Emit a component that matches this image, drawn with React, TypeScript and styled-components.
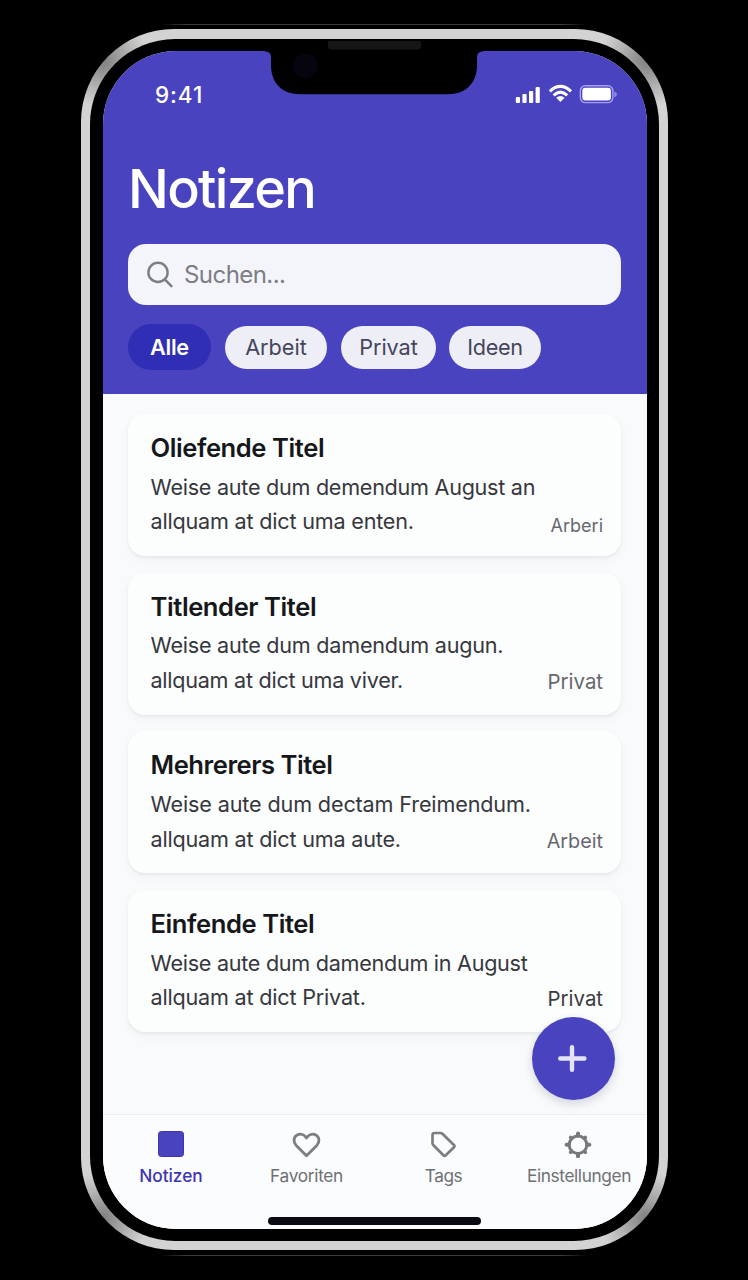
import React from "react";
import styled, { createGlobalStyle } from "styled-components";

const indigo = "#4943c0";

const GlobalStyle = createGlobalStyle`
  * { box-sizing: border-box; }
  body {
    margin: 0;
    background: #000;
    font-family: Inter, "Liberation Sans", sans-serif;
  }
  h1, h2, p { margin: 0; }
  button { font: inherit; border: 0; padding: 0; background: none; }
`;

const Stage = styled.main`
  width: 748px;
  height: 1280px;
  padding: 24px 77px 0 77px;
  background: #000;
`;

const Halo = styled.div`
  width: 594px;
  height: 1232px;
  padding: 5px 3px 0 4px;
  border-radius: 96px;
  background:
    linear-gradient(90deg, transparent 80px, #3c3c3c 110px, #3c3c3c 484px, transparent 514px) top / 100% 1px no-repeat,
    linear-gradient(90deg, transparent 80px, #3c3c3c 110px, #3c3c3c 484px, transparent 514px) bottom / 100% 1px no-repeat;
`;

const Frame = styled.div`
  width: 587px;
  height: 1221px;
  padding: 9.5px 9px;
  border-radius: 93px;
  background:
    radial-gradient(circle at 22px 32px, #808080 0, #b4b4b4 28px, #d3d3d3 46px, transparent 52px) 0 0 / 90px 90px no-repeat,
    radial-gradient(circle at 68px 32px, #808080 0, #b4b4b4 28px, #d3d3d3 46px, transparent 52px) 100% 0 / 90px 90px no-repeat,
    radial-gradient(circle at 22px 58px, #808080 0, #b4b4b4 28px, #d3d3d3 46px, transparent 52px) 0 100% / 90px 90px no-repeat,
    radial-gradient(circle at 68px 58px, #808080 0, #b4b4b4 28px, #d3d3d3 46px, transparent 52px) 100% 100% / 90px 90px no-repeat,
    #d3d3d3;
`;

const Bezel = styled.div`
  position: relative;
  height: 100%;
  padding: 12.5px 12.5px 12px 13px;
  border-radius: 85px;
  background: #000;
`;

const Screen = styled.div`
  position: relative;
  display: flex;
  flex-direction: column;
  height: 1178px;
  border-radius: 73px;
  overflow: hidden;
  background: #f9fafb;
`;

const Notch = styled.svg`
  position: absolute;
  top: 2px;
  left: 175px;
`;

const Header = styled.header`
  display: flex;
  flex-direction: column;
  flex: none;
  height: 342.5px;
  padding: 0 25.5px 0 25px;
  background: ${indigo};
`;

const StatusBar = styled.div`
  display: flex;
  justify-content: space-between;
  align-items: center;
  height: 86px;
  padding: 0 4px 0 27px;
`;

const Clock = styled.span`
  color: #fff;
  font-size: 22.5px;
  font-weight: 500;
  letter-spacing: 0.9px;
`;

const PageTitle = styled.h1`
  height: 107px;
  padding-top: 18.5px;
  color: #fff;
  font-size: 54px;
  line-height: 66px;
  font-weight: 550;
  letter-spacing: -1.7px;
`;

const SearchField = styled.div`
  display: flex;
  align-items: center;
  flex: none;
  height: 61px;
  padding-left: 19px;
  gap: 11px;
  border-radius: 18px;
  background: #f4f5fa;
  color: #7d7d82;
  font-size: 24px;
  letter-spacing: -0.55px;
`;

const Chips = styled.div`
  display: flex;
  align-items: center;
  height: 46px;
  margin-top: 18.5px;
`;

const Chip = styled.button<{ $active?: boolean; $width: number; $gap: number; $spacing: number }>`
  width: ${(p) => p.$width}px;
  height: ${(p) => (p.$active ? 46 : 43.5)}px;
  margin-top: ${(p) => (p.$active ? 0 : 1.5)}px;
  margin-right: ${(p) => p.$gap}px;
  border-radius: 23px;
  background: ${(p) => (p.$active ? "#302eb4" : "#eeeef7")};
  color: ${(p) => (p.$active ? "#fff" : "#45455c")};
  font-size: 21.7px;
  font-weight: ${(p) => (p.$active ? 600 : 400)};
  letter-spacing: ${(p) => p.$spacing}px;
  text-align: center;
`;

const Notes = styled.section`
  display: flex;
  flex-direction: column;
  flex: 1;
  gap: 16.7px;
  padding: 20.5px 25.5px 0 25px;
  background: #f9fafb;
`;

const Card = styled.article`
  display: flex;
  flex-direction: column;
  height: 142px;
  padding: 17px 18px 0 22.5px;
  border-radius: 17px;
  background: #fcfdfd;
  box-shadow: 0 2px 3px rgba(60, 80, 100, 0.07), 0 4px 12px rgba(60, 80, 100, 0.04);
`;

const CardTitle = styled.h2<{ $spacing: number }>`
  color: #16171a;
  font-size: 25.6px;
  line-height: 34px;
  font-weight: 600;
  letter-spacing: ${(p) => p.$spacing}px;
`;

const CardLine = styled.p<{ $spacing: number }>`
  height: 34.5px;
  color: #36373c;
  font-size: 21.6px;
  line-height: 34.5px;
  letter-spacing: ${(p) => p.$spacing}px;
  white-space: nowrap;
`;

const CardText = styled.div`
  margin-top: 4.7px;
`;

const LastRow = styled.div`
  display: flex;
  justify-content: space-between;
`;

const Category = styled.span<{ $size: number; $top: number; $dark?: boolean }>`
  padding-top: ${(p) => p.$top}px;
  color: ${(p) => (p.$dark ? "#3a3b40" : "#67686d")};
  font-size: ${(p) => p.$size}px;
  line-height: 36px;
`;

const AddButton = styled.button`
  position: absolute;
  top: 966px;
  left: 428.5px;
  display: flex;
  align-items: center;
  justify-content: center;
  width: 83px;
  height: 83px;
  border-radius: 50%;
  background: ${indigo};
  box-shadow: 0 4px 10px rgba(60, 70, 110, 0.2);
`;

const TabBar = styled.nav`
  display: grid;
  grid-template-columns: 136px 135px 139px 132px;
  flex: none;
  height: 115.5px;
  padding-top: 15.5px;
  border-top: 1.5px solid #eceef0;
  background: #fbfcfd;
`;

const Tab = styled.div<{ $active?: boolean; $spacing: number }>`
  display: flex;
  flex-direction: column;
  align-items: center;
  gap: 5px;
  color: ${(p) => (p.$active ? "#3f35b0" : "#6f7074")};
  font-size: 17.3px;
  line-height: 26px;
  font-weight: ${(p) => (p.$active ? 500 : 400)};
  letter-spacing: ${(p) => p.$spacing}px;
  white-space: nowrap;
`;

const HomeIndicator = styled.div`
  position: absolute;
  bottom: 4px;
  left: 165px;
  width: 213px;
  height: 8px;
  border-radius: 4px;
  background: #090a12;
`;

const notes = [
  { title: "Oliefende Titel", ts: -0.43, a: "Weise aute dum demendum August an", as: -0.27, b: "allquam at dict uma enten.", bs: -0.2, cat: "Arberi", size: 18, top: 3.5 },
  { title: "Titlender Titel", ts: -0.43, a: "Weise aute dum damendum augun.", as: -0.24, b: "allquam at dict uma viver.", bs: -0.27, cat: "Privat", size: 20.4, top: 1.5 },
  { title: "Mehrerers Titel", ts: -0.45, a: "Weise aute dum dectam Freimendum.", as: -0.14, b: "allquam at dict uma aute.", bs: -0.2, cat: "Arbeit", size: 19.8, top: 1.3 },
  { title: "Einfende Titel", ts: -0.43, a: "Weise aute dum damendum in August", as: -0.28, b: "allquam at dict Privat.", bs: -0.2, cat: "Privat", size: 20.4, top: 0.5, dark: true },
];

const StatusIcons = () => (
  <svg width="102" height="22" viewBox="0 -2 102 22" fill="#fff">
    <rect x="0.8" y="12" width="4.2" height="6" rx="1" />
    <rect x="7.4" y="9" width="4.2" height="9" rx="1" />
    <rect x="14" y="6" width="4.2" height="12" rx="1" />
    <rect x="20.6" y="2" width="4.2" height="16" rx="1" />
    <g fill="none" stroke="#fff" strokeWidth="3">
      <path d="M34.8 6.3 Q45.4 -3.6 56 6.3" />
      <path d="M38.6 10.3 Q45.4 4 52.2 10.3" />
    </g>
    <path d="M41.2 12.8 Q45.4 9.1 49.6 12.8 L45.4 17 Z" />
    <rect x="65.3" y="0.8" width="32.6" height="16.8" rx="5" fill="none" stroke="#a5a1f0" strokeWidth="1.4" />
    <rect x="67.3" y="2.8" width="28.6" height="12.8" rx="3" />
    <path d="M99.2 6.6 q2.8 .6 2.8 2.8 q0 2.2 -2.8 2.8 z" fill="#8e89e6" />
  </svg>
);

const SearchIcon = () => (
  <svg width="26" height="27" viewBox="0 0 26 27" fill="none" stroke="#7d7d82" strokeWidth="2.4" strokeLinecap="round">
    <circle cx="11" cy="11.4" r="9.6" />
    <path d="M18 18.6 L24.4 25.2" />
  </svg>
);

const NotesIcon = () => (
  <svg width="28" height="28" viewBox="0 0 28 28">
    <rect x="1.5" y="1.5" width="25" height="25" rx="2.8" fill={indigo} stroke="#3d35a8" />
  </svg>
);

const HeartIcon = () => (
  <svg width="30" height="28" viewBox="0 0 30 28" fill="none" stroke="#7d7e82" strokeWidth="2.8" strokeLinejoin="round">
    <path d="M14.5 25.8 L4.2 15.4 C1 12 1.4 7 5.2 5 C8.6 3.3 12.4 4.6 14.5 8 C16.6 4.6 20.4 3.3 23.8 5 C27.6 7 28 12 24.8 15.4 Z" />
  </svg>
);

const TagIcon = () => (
  <svg width="30" height="28" viewBox="0 0 30 28" fill="none" stroke="#7d7e82" strokeWidth="2.7" strokeLinejoin="round">
    <path d="M5.5 3 H11.3 Q12.7 3 13.7 4 L24.9 15 Q26 16.1 25 17.2 L16.7 25.3 Q15.5 26.4 14.4 25.3 L4.5 15.2 Q3.5 14.2 3.5 13 V5 Q3.5 3 5.5 3 Z" />
  </svg>
);

const GearIcon = () => (
  <svg width="30" height="28" viewBox="0 0 30 28" fill="none" stroke="#77787c">
    <circle cx="14" cy="14.8" r="8.8" strokeWidth="3" />
    {[0, 45, 90, 135, 180, 225, 270, 315].map((a) => (
      <path
        key={a}
        d={a % 90 ? "M14 5.6 V4.4" : "M14 5.6 V3.4"}
        strokeWidth={a % 90 ? 3.6 : 4}
        strokeLinecap="round"
        transform={`rotate(${a} 14 14.8)`}
      />
    ))}
  </svg>
);

export default function App() {
  return (
    <Stage>
      <GlobalStyle />
      <Halo>
        <Frame>
          <Bezel>
            <Screen>
              <Header>
                <StatusBar>
                  <Clock>9:41</Clock>
                  <StatusIcons />
                </StatusBar>
                <PageTitle>Notizen</PageTitle>
                <SearchField>
                  <SearchIcon />
                  <span>Suchen...</span>
                </SearchField>
                <Chips>
                  <Chip $active $width={83} $gap={14} $spacing={-0.3}>Alle</Chip>
                  <Chip $width={102} $gap={14} $spacing={0}>Arbeit</Chip>
                  <Chip $width={95} $gap={13} $spacing={-0.1}>Privat</Chip>
                  <Chip $width={92} $gap={0} $spacing={-0.3}>Ideen</Chip>
                </Chips>
              </Header>
              <Notes>
                {notes.map((n) => (
                  <Card key={n.title}>
                    <CardTitle $spacing={n.ts}>{n.title}</CardTitle>
                    <CardText>
                      <CardLine $spacing={n.as}>{n.a}</CardLine>
                      <LastRow>
                        <CardLine $spacing={n.bs}>{n.b}</CardLine>
                        <Category $size={n.size} $top={n.top} $dark={n.dark}>{n.cat}</Category>
                      </LastRow>
                    </CardText>
                  </Card>
                ))}
              </Notes>
              <TabBar>
                <Tab $active $spacing={-0.05}><NotesIcon />Notizen</Tab>
                <Tab $spacing={-0.3}><HeartIcon />Favoriten</Tab>
                <Tab $spacing={-0.5}><TagIcon />Tags</Tab>
                <Tab $spacing={-0.4}><GearIcon />Einstellungen</Tab>
              </TabBar>
              <AddButton aria-label="Neue Notiz">
                <svg width="30" height="30" viewBox="0 0 30 30" stroke="#e4e3f8" strokeWidth="4.4" strokeLinecap="round">
                  <path d="M14 3.2 V25.8 M2.2 14.5 H26.4" />
                </svg>
              </AddButton>
              <HomeIndicator />
            </Screen>
            <Notch width="218" height="58" viewBox="0 0 218 58">
              <path d="M0 0 H218 V10.5 Q212 10.5 212 16 V24 C212 42 201 53.2 183 53.2 H35 C17 53.2 6 42 6 24 V16 Q6 10.5 0 10.5 Z" fill="#000" />
              <rect x="63" y="-1" width="93" height="9.5" rx="3" fill="#161617" />
              <circle cx="40" cy="25" r="12.5" fill="#06050f" />
            </Notch>
          </Bezel>
        </Frame>
      </Halo>
    </Stage>
  );
}
